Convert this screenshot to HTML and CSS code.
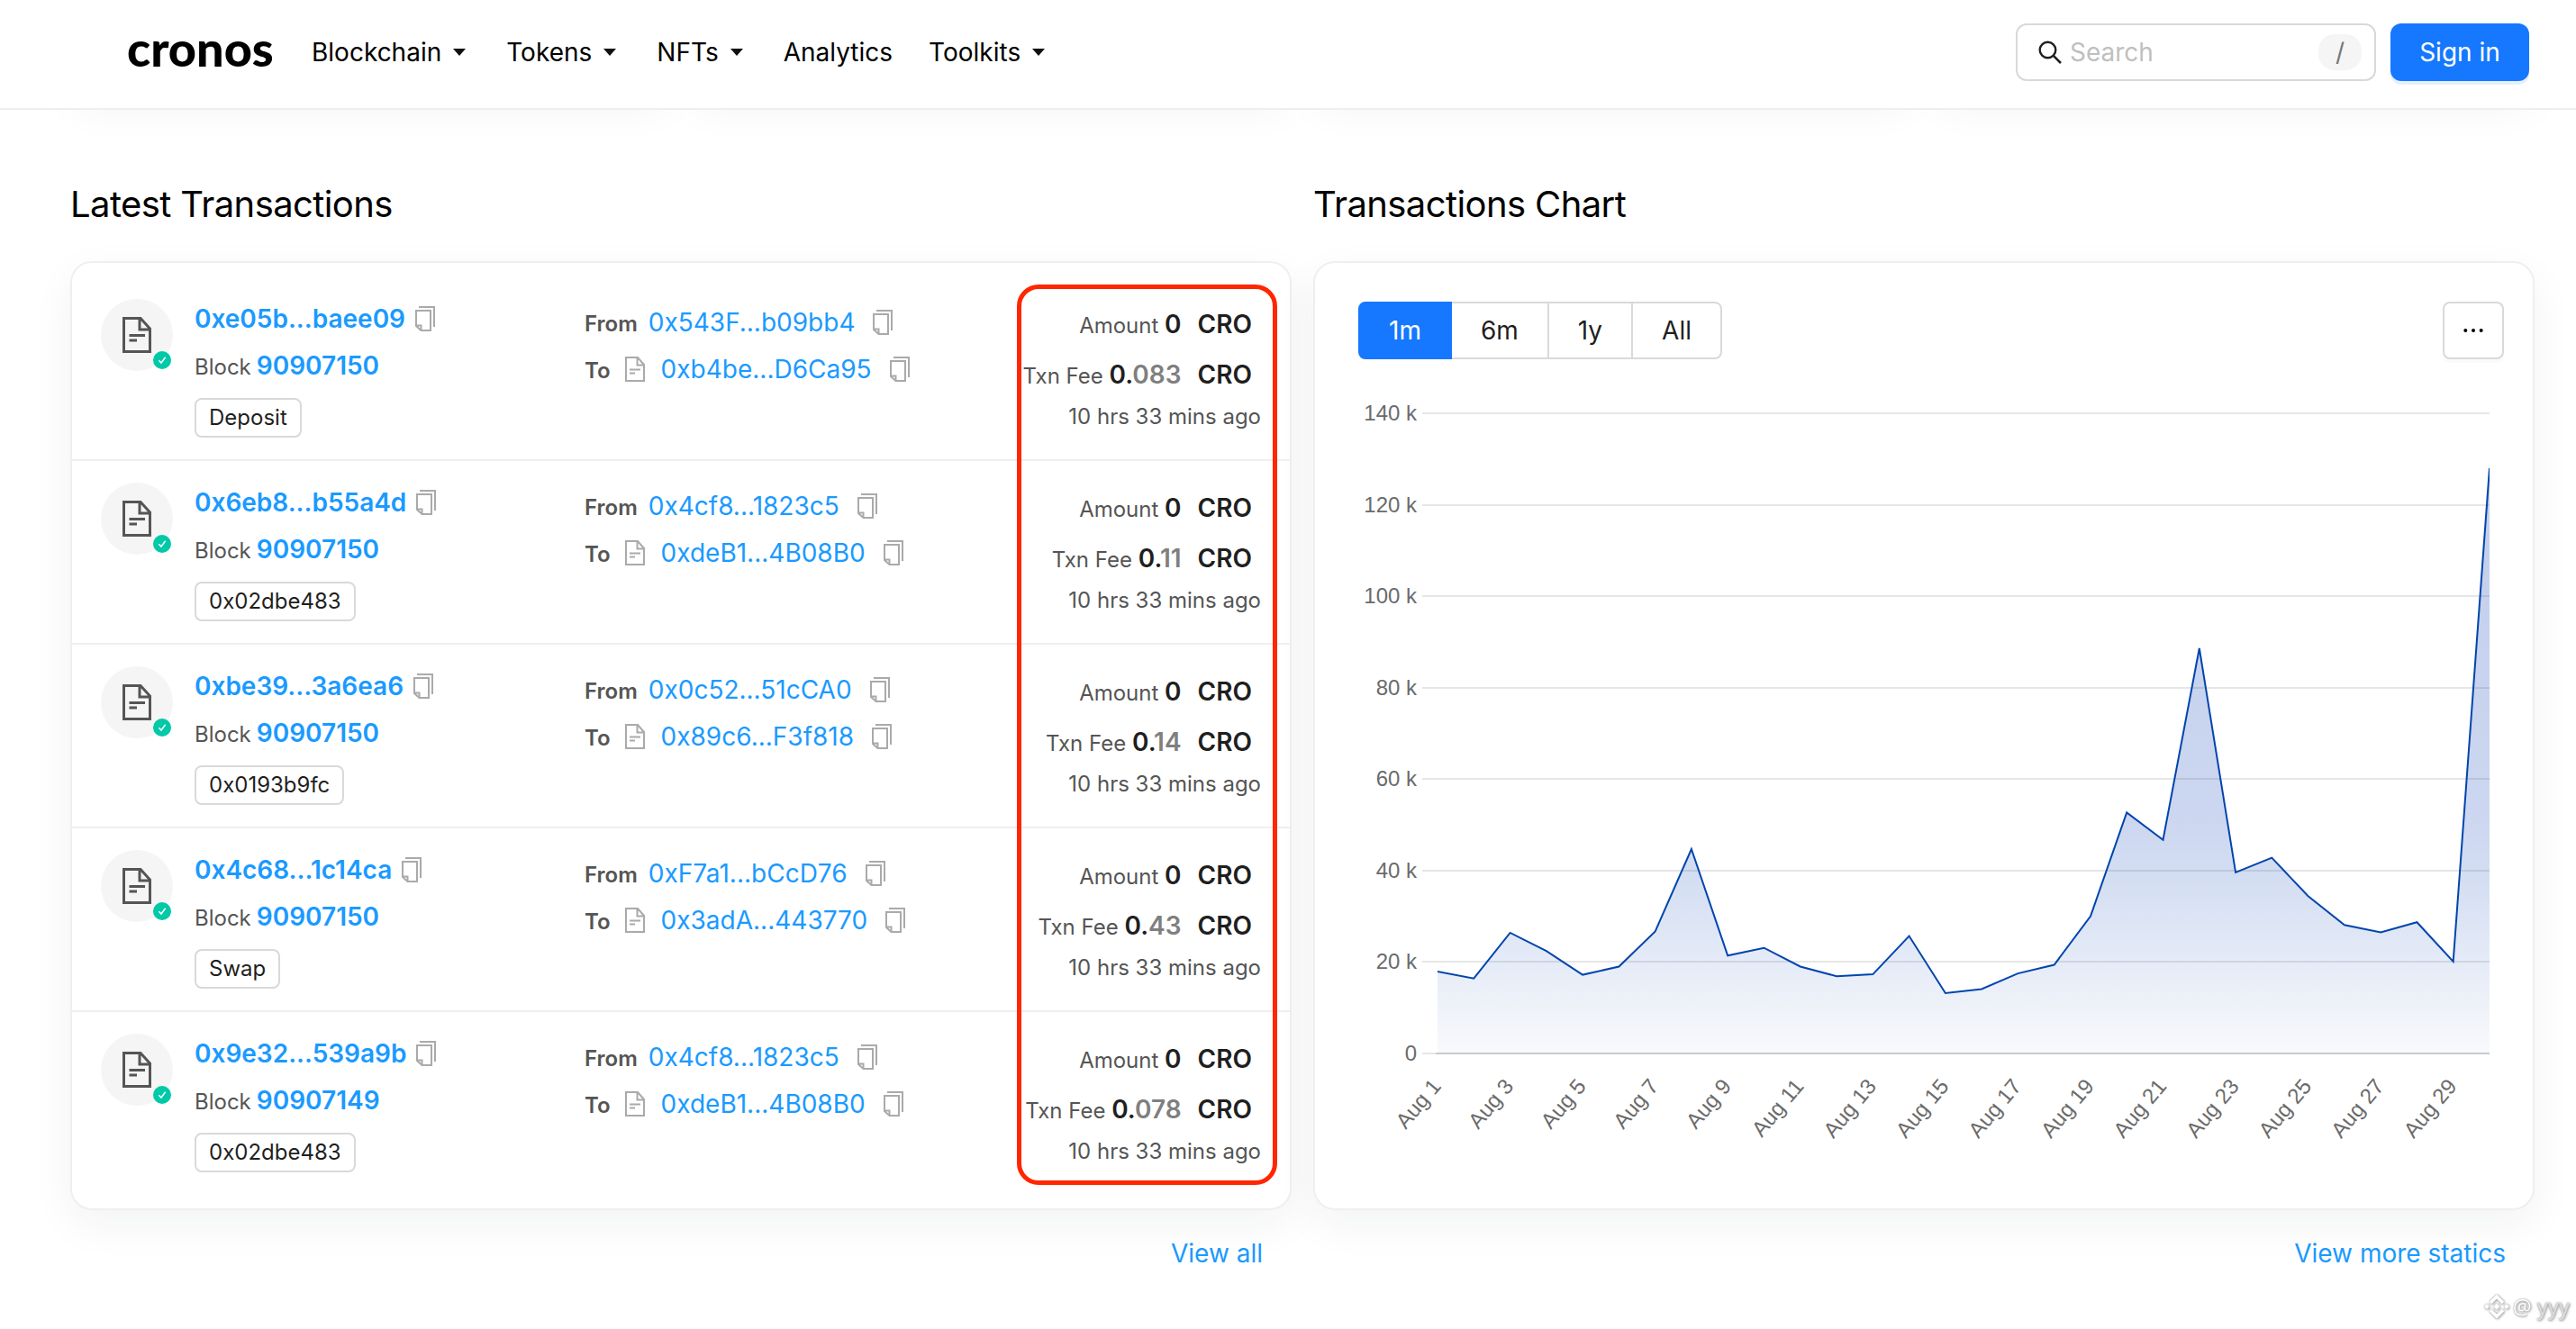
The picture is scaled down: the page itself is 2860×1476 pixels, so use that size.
FILE: index.html
```
<!DOCTYPE html>
<html lang="en">
    <head>
        <meta charset="UTF-8">
        <meta name="viewport" content="width=device-width, initial-scale=1.0">
        <title>Cronos Explorer</title>

        <link rel="stylesheet" href="styles.css">
    </head>
    <body>

        <!-- shared icons -->
        <svg class="sprite" width="0" height="0">
            <symbol id="icon-doc" viewBox="0 0 32 40">
                <path d="M1.5 1.5H20L30.500 13V38.500H1.500Z M19 1.500V14H30.500 M7.500 20.500H25 M7.500 26H16" fill="none" stroke="currentColor" stroke-width="3"/>
            </symbol>
            <symbol id="icon-doc-small" viewBox="0 0 22 28">
                <path d="M1 1H14L21 9V27H1Z M13.500 1V9.500H21 M5 14.500H17 M5 18.500H11" fill="none" stroke="currentColor" stroke-width="2"/>
            </symbol>
            <symbol id="icon-copy" viewBox="0 0 22 28">
                <path d="M4 1H21V23 M1 5H17V27H6.500L1 22Z M1 21.500H6.500V27" fill="none" stroke="currentColor" stroke-width="2"/>
            </symbol>
            <symbol id="icon-check" viewBox="0 0 20 20">
                <circle cx="10" cy="10" r="10" fill="#00c9a7"/>
                <path d="M6.400 10.200L9 13L13.600 6.800" fill="none" stroke="#fff" stroke-width="1.500"/>
            </symbol>
        </svg>

        <header class="header">
            <div class="logo">cronos</div>

            <nav class="nav">
                <a class="dropdown">Blockchain</a>
                <a class="dropdown">Tokens</a>
                <a class="dropdown">NFTs</a>
                <a>Analytics</a>
                <a class="dropdown">Toolkits</a>
            </nav>

            <div class="search">
                <svg width="26" height="26" viewBox="0 0 26 26">
                    <circle cx="10.500" cy="10.500" r="8.800" fill="none" stroke="#1f1f1f" stroke-width="2.400"/>
                    <path d="M16.800 16.800L25 25" stroke="#1f1f1f" stroke-width="2.600"/>
                </svg>
                <span class="placeholder">Search</span>
                <kbd>/</kbd>
            </div>
            <button class="sign-in">Sign in</button>
        </header>

        <div class="stats">
            <div class="stat"></div>
            <div class="stat"></div>
            <div class="stat"></div>
            <div class="stat"></div>
        </div>

        <main class="columns">
            <section>
                <h2>Latest Transactions</h2>
                <div class="card" id="transactions">
                    <div class="highlight"></div>
                </div>
                <a class="more">View all</a>
            </section>

            <section>
                <h2>Transactions Chart</h2>
                <div class="card chart-card">
                    <div class="toolbar">
                        <div class="ranges">
                            <button class="active">1m</button>
                            <button>6m</button>
                            <button>1y</button>
                            <button>All</button>
                        </div>
                        <button class="options">
                            <svg width="22" height="6" viewBox="0 0 22 6">
                                <circle cx="2.300" cy="3" r="2"/>
                                <circle cx="11" cy="3" r="2"/>
                                <circle cx="19.700" cy="3" r="2"/>
                            </svg>
                        </button>
                    </div>
                    <svg id="chart" width="1272" height="860" viewBox="1508 439 1272 860">
                        <defs>
                            <linearGradient id="fill" gradientUnits="userSpaceOnUse" x1="0" y1="520" x2="0" y2="1170">
                                <stop offset="0" stop-color="#0030b0" stop-opacity=".24"/>
                                <stop offset=".6" stop-color="#0034b4" stop-opacity=".2"/>
                                <stop offset=".7" stop-color="#003cb4" stop-opacity=".17"/>
                                <stop offset=".85" stop-color="#003cb4" stop-opacity=".1"/>
                                <stop offset="1" stop-color="#002a86" stop-opacity=".025"/>
                            </linearGradient>
                        </defs>
                    </svg>
                </div>
                <a class="more">View more statics</a>
            </section>
        </main>

        <div class="watermark">
            <svg width="28" height="28" viewBox="0 0 28 28">
                <path d="M7 10L14 3L21 10 M7 18L14 25L21 18" fill="none" stroke="currentColor" stroke-width="3.500"/>
                <path d="M14 10.500L17.500 14L14 17.500L10.500 14Z M3 11L6 14L3 17L0 14Z M25 11L28 14L25 17L22 14Z" fill="currentColor"/>
            </svg>
            <span class="at">@</span>
            <span class="user">yyy</span>
        </div>

        <script>
            var transactions = [
                { hash: '0xe05b...baee09', block: '90907150', method: 'Deposit', from: '0x543F...b09bb4', to: '0xb4be...D6Ca95', fee: '083' },
                { hash: '0x6eb8...b55a4d', block: '90907150', method: '0x02dbe483', from: '0x4cf8...1823c5', to: '0xdeB1...4B08B0', fee: '11' },
                { hash: '0xbe39...3a6ea6', block: '90907150', method: '0x0193b9fc', from: '0x0c52...51cCA0', to: '0x89c6...F3f818', fee: '14' },
                { hash: '0x4c68...1c14ca', block: '90907150', method: 'Swap', from: '0xF7a1...bCcD76', to: '0x3adA...443770', fee: '43' },
                { hash: '0x9e32...539a9b', block: '90907149', method: '0x02dbe483', from: '0x4cf8...1823c5', to: '0xdeB1...4B08B0', fee: '078' },
            ];

            // daily transactions in thousands, Aug 1 - Aug 30
            var daily = [
                17.9, 16.4, 26.4, 22.4, 17.2, 19.0, 26.7, 44.7, 21.4, 23.1,
                19.0, 16.9, 17.3, 25.7, 13.2, 14.1, 17.5, 19.4, 30.0, 52.7,
                46.7, 88.6, 39.6, 42.8, 34.4, 28.1, 26.5, 28.7, 20.1, 128.0
            ];

            function icon(name, width, height) {
                return '<svg class="' + name + '" width="' + width + '" height="' + height + '"><use href="#' + name + '"/></svg>';
            }

            var copy = icon('icon-copy', 22, 28);

            var rows = transactions.map(function(tx) {
                return '<div class="row">' +
                    '<div class="avatar">' + icon('icon-doc', 32, 40) + icon('icon-check', 20, 20) + '</div>' +
                    '<div class="info">' +
                        '<div class="line"><a class="hash">' + tx.hash + '</a>' + copy + '</div>' +
                        '<div class="line"><span>Block</span><a class="hash">' + tx.block + '</a></div>' +
                        '<div class="tag">' + tx.method + '</div>' +
                    '</div>' +
                    '<div class="parties">' +
                        '<div class="line"><b>From</b><a>' + tx.from + '</a>' + copy + '</div>' +
                        '<div class="line"><b>To</b>' + icon('icon-doc-small', 22, 28) + '<a>' + tx.to + '</a>' + copy + '</div>' +
                    '</div>' +
                    '<div class="value">' +
                        '<div class="amount">Amount <b>0</b><b class="unit">CRO</b></div>' +
                        '<div class="amount">Txn Fee <b>0.<i>' + tx.fee + '</i></b><b class="unit">CRO</b></div>' +
                        '<div class="time">10 hrs 33 mins ago</div>' +
                    '</div>' +
                '</div>';
            });

            document.getElementById('transactions').insertAdjacentHTML('afterbegin', rows.join(''));

            // chart scales
            var left = 1596, right = 2764, bottom = 1170, top0 = 459;

            function x(i) { return left + i * (right - left) / (daily.length - 1); }
            function y(v) { return bottom - v * (bottom - top0) / 140; }

            var out = '';

            for (var v = 0; v <= 140; v += 20) {
                var gy = Math.round(y(v));
                out += '<line class="grid" x1="1579" x2="' + right + '" y1="' + gy + '" y2="' + gy + '"/>';
                out += '<text class="tick" x="1573" y="' + (gy + 8) + '">' + (v ? v + ' k' : 0) + '</text>';
            }

            var points = daily.map(function(v, i) { return x(i).toFixed(1) + ',' + y(v).toFixed(1); });

            out += '<line class="axis" x1="1594" x2="' + right + '" y1="1170" y2="1170"/>';
            out += '<polygon fill="url(#fill)" points="' + left + ',' + bottom + ' ' + points.join(' ') + ' ' + right + ',' + bottom + '"/>';
            out += '<clipPath id="plot"><rect x="' + left + '" y="440" width="' + (right - left) + '" height="740"/></clipPath>';
            out += '<polyline class="series" clip-path="url(#plot)" points="' + points.join(' ') + '"/>';

            for (var i = 0; i < daily.length; i += 2) {
                out += '<text class="tick" transform="translate(' + (x(i) + 5) + ' 1207) rotate(-50)">Aug ' + (i + 1) + '</text>';
            }

            document.getElementById('chart').insertAdjacentHTML('beforeend', out);
        </script>
    </body>
</html>
```
FILE: styles.css
```
*{
    box-sizing: border-box;
}

html, body{
    margin: 0;
    padding: 0;
    height: 1476px;
    overflow: hidden;
}

body{
    position: relative;
    background: #fff;
    color: #1f1f1f;
    font-family: Inter, 'Liberation Sans', sans-serif;
    font-size: 28px;
}

button{
    font: inherit;
    color: inherit;
    background: #fff;
    cursor: pointer;
}

.sprite{
    position: absolute;
}

/* header */
.header{
    position: relative;
    z-index: 2;
    display: flex;
    align-items: center;
    height: 122px;
    padding: 0 52px 4px 141px;
    background: #fff;
    border-bottom: 2px solid #eee;
    color: #000;
}

.logo{
    width: 205px;
    margin-bottom: 9px;
    font-family: Lato, sans-serif;
    font-size: 54px;
    font-weight: 900;
    line-height: 60px;
}

.nav{
    display: flex;
    gap: 40px;
    flex: 1;
}

.nav a{
    display: flex;
    align-items: center;
}

.dropdown::after{
    content: '';
    margin: 0 5px 0 13px;
    border: 7px solid transparent;
    border-top: 8px solid #111;
    border-bottom: 0;
}

.search{
    display: flex;
    align-items: center;
    width: 400px;
    height: 64px;
    padding: 0 14px 0 23px;
    border: 2px solid #d9d9d9;
    border-radius: 12px;
}

.placeholder{
    flex: 1;
    margin-left: 9px;
    color: #bfbfbf;
}

kbd{
    width: 48px;
    height: 40px;
    border-radius: 18px;
    background: #f5f5f5;
    color: #777;
    font: 28px/40px Inter, sans-serif;
    text-align: center;
}

.sign-in{
    width: 154px;
    height: 64px;
    margin-left: 16px;
    border: 0;
    border-radius: 12px;
    background: #1677ff;
    color: #fff;
    box-shadow: 0 4px 0 rgba(5, 95, 255, .1);
}

/* cards scrolled under the header */
.stats{
    display: grid;
    grid-template-columns: repeat(4, 1fr);
    gap: 24px;
    height: 60px;
    margin: -60px 46px 0 78px;
}

.stat, .card{
    border: 2px solid #efefef;
    border-radius: 24px;
    background: #fff;
    box-shadow: 0 16px 48px rgba(20, 30, 50, .055);
}

.stat{
    height: 40px;
}

.columns{
    display: grid;
    grid-template-columns: repeat(2, 1356px);
    gap: 24px;
    padding-left: 78px;
}

h2{
    height: 168px;
    margin: 0;
    padding-top: 79px;
    color: #000;
    font-size: 40px;
    font-weight: 400;
    line-height: 52px;
    letter-spacing: -.6px;
}

.card{
    position: relative;
    height: 1054px;
    padding: 16px 0;
}

.more{
    display: block;
    margin-top: 31px;
    padding-right: 32px;
    text-align: right;
    line-height: 34px;
}

a{
    color: #1a9aff;
}

.nav a{
    color: #000;
}

/* transactions */
.row{
    display: flex;
    height: 204px;
    padding: 24px 32px 0;
    border-bottom: 2px solid #efefef;
}

.row:nth-child(5){
    border: 0;
}

.avatar{
    position: relative;
    display: flex;
    align-items: center;
    justify-content: center;
    width: 80px;
    height: 80px;
    border-radius: 50%;
    background: #f5f5f5;
    color: #555;
}

.avatar .icon-check{
    position: absolute;
    right: 2px;
    bottom: 2px;
}

.info{
    width: 457px;
    padding-left: 24px;
}

.line{
    display: flex;
    align-items: baseline;
    height: 52px;
    line-height: 44px;
    color: #555;
    font-size: 24px;
}

.line a{
    font-size: 28px;
}

.line b{
    font-weight: 600;
}

.line .hash{
    font-weight: 600;
}

span + .hash{
    margin-left: 6px;
}

.icon-copy{
    margin-left: 11px;
    color: #aaa;
    transform: translateY(4px);
}

.tag{
    display: inline-block;
    height: 44px;
    margin-top: 6px;
    padding: 0 14px;
    border: 2px solid #d9d9d9;
    border-radius: 8px;
    font-size: 24px;
    line-height: 40px;
}

.parties{
    flex: 1;
    padding-top: 4px;
}

.parties b{
    margin-right: 12px;
}

.parties .icon-copy{
    margin-left: 20px;
}

.icon-doc-small{
    margin: 0 18px 0 4px;
    color: #aaa;
    transform: translateY(4px);
}

.value{
    padding-top: 4px;
    color: #555;
    font-size: 24px;
    text-align: right;
    white-space: nowrap;
}

.amount{
    height: 56px;
    padding-right: 10px;
    line-height: 48px;
}

.amount b{
    color: #1f1f1f;
    font-size: 28px;
    font-weight: 600;
}

.amount i{
    color: #7f7f7f;
    font-style: normal;
}

.amount .unit{
    margin-left: 18px;
}

.time{
    line-height: 30px;
}

.highlight{
    position: absolute;
    top: 24px;
    left: 1049px;
    width: 289px;
    height: 1000px;
    border: 5px solid #ff2600;
    border-radius: 24px;
}

/* chart */
.chart-card{
    padding: 43px 32px 0 48px;
}

.toolbar{
    display: flex;
    justify-content: space-between;
    margin-bottom: 40px;
}

.ranges{
    display: flex;
}

.ranges button{
    height: 64px;
    margin-left: -2px;
    padding: 0 32px;
    border: 2px solid #d9d9d9;
}

.ranges button:first-child{
    margin: 0;
    border-color: #1677ff;
    border-radius: 8px 0 0 8px;
}

.ranges button:last-child{
    border-radius: 0 8px 8px 0;
}

.ranges .active{
    position: relative;
    background: #1677ff;
    color: #fff;
}

.options{
    display: flex;
    align-items: center;
    justify-content: center;
    width: 68px;
    height: 64px;
    padding: 0;
    border: 2px solid #d9d9d9;
    border-radius: 8px;
    box-shadow: 0 4px 0 rgba(0, 0, 0, .02);
}

#chart{
    display: block;
}

.grid{
    stroke: #e6e6e6;
    stroke-width: 2;
}

.axis{
    stroke: #ccc;
    stroke-width: 2;
}

.series{
    fill: none;
    stroke: #0045ad;
    stroke-width: 2;
}

.tick{
    fill: #6b6b6b;
    font-family: 'Liberation Sans', sans-serif;
    font-size: 24px;
    text-anchor: end;
}

/* watermark */
.watermark{
    position: absolute;
    left: 2758px;
    bottom: 11px;
    display: flex;
    align-items: center;
    color: #fff;
    font-family: 'Open Sans', sans-serif;
    font-size: 24px;
    line-height: 28px;
    white-space: nowrap;
    filter: drop-shadow(0 0 1px #999) drop-shadow(1px 1px 1px #bbb);
}

.at{
    margin: 0 6px 0 4px;
    font-size: 23px;
}

.user{
    color: #ddd;
}
```
